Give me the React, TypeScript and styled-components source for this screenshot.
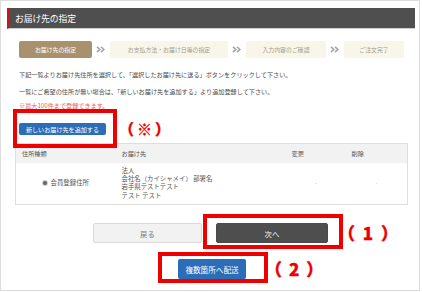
import React from "react";
import styled, { createGlobalStyle } from "styled-components";

const Global = createGlobalStyle`
  html, body { margin: 0; padding: 0; background: #fff; }
  body { font-family: "Noto Sans CJK JP", "Noto Sans", sans-serif; color: #444; }
  * { box-sizing: border-box; }
`;

const Frame = styled.div`
  width: 420px;
  height: 291px;
  border: 1px solid #dcdcdc;
  padding: 7px 4px 0 6px;
  display: flex;
  flex-direction: column;
`;

const TitleBar = styled.div`
  height: 21px;
  background: #4f4f4f;
  border-left: 2px solid #c8161d;
  border-bottom: 1px solid #cfcfcf;
  color: #fff;
  font-size: 8.8px;
  display: flex;
  align-items: center;
  padding-left: 6px;
  letter-spacing: -0.1px;
`;

const Content = styled.div`
  padding: 0 2px 0 8px;
  display: flex;
  flex-direction: column;
`;

const Steps = styled.div`
  display: flex;
  align-items: center;
  margin: 12px 0 0 4px;
  height: 17px;
`;

const Step = styled.div<{ $active?: boolean; $w: number }>`
  width: ${(p) => p.$w}px;
  height: 17px;
  border-radius: 2px;
  background: ${(p) => (p.$active ? "#a8916c" : "#f8f5e9")};
  color: ${(p) => (p.$active ? "#fff" : "#a39d92")};
  font-size: 5.9px;
  display: flex;
  align-items: center;
  justify-content: center;
  white-space: nowrap;
`;

const Arrow = styled.div`
  width: 18px;
  display: flex;
  justify-content: center;
`;

const Text = styled.p<{ $top: number; $red?: boolean }>`
  margin: ${(p) => p.$top}px 0 0 4px;
  font-size: 6.15px;
  line-height: 10px;
  color: ${(p) => (p.$red ? "#ec5b5b" : "#4a4a4a")};
  white-space: nowrap;
`;

const Marked = styled.div<{ $top: number }>`
  position: relative;
  margin-top: ${(p) => p.$top}px;
  display: flex;
`;

const RedBox = styled.div<{ $l: number; $r: number; $t: number; $b: number }>`
  position: absolute;
  left: ${(p) => p.$l}px;
  right: ${(p) => p.$r}px;
  top: ${(p) => p.$t}px;
  bottom: ${(p) => p.$b}px;
  border: 4px solid #ee0000;
  pointer-events: none;
`;

const Note = styled.span<{ $left: number; $size: number; $ls: number }>`
  position: absolute;
  left: ${(p) => p.$left}px;
  top: 50%;
  transform: translateY(-54%);
  color: #ee0000;
  font-weight: 900;
  font-size: ${(p) => p.$size}px;
  letter-spacing: ${(p) => p.$ls}px;
  white-space: nowrap;
  font-family: "Noto Sans CJK JP", sans-serif;
  -webkit-text-stroke: 0.3px #ee0000;
`;

const BlueButton = styled.button<{ $w: number; $h: number; $fs: number }>`
  width: ${(p) => p.$w}px;
  height: ${(p) => p.$h}px;
  background: #2c6db8;
  color: #fff;
  border: none;
  border-radius: 2px;
  font-family: inherit;
  font-size: ${(p) => p.$fs}px;
  padding: 0;
  display: flex;
  align-items: center;
  justify-content: center;
  white-space: nowrap;
`;

const AddWrap = styled(Marked)`
  margin-left: 4px;
  align-self: flex-start;
`;

const Table = styled.table`
  margin-top: 8px;
  width: 392px;
  border-collapse: collapse;
  border: 1px solid #dedede;
  font-size: 6.2px;
  color: #555;
  table-layout: fixed;
`;

const Th = styled.th<{ $w: number }>`
  width: ${(p) => p.$w}px;
  height: 19px;
  background: #f2f2f2;
  font-weight: 400;
  text-align: left;
  padding: 0 0 0 6px;
  color: #555;
`;

const Td = styled.td<{ $center?: boolean }>`
  height: 42px;
  padding: 0 0 0 6px;
  text-align: ${(p) => (p.$center ? "center" : "left")};
  vertical-align: middle;
  font-size: 6.4px;
  line-height: 8.3px;
  color: #555;
`;

const CenterCell = styled(Td)`
  padding: 0;
  color: #999;
  font-size: 5px;
`;

const KindLabel = styled.div`
  display: flex;
  align-items: center;
  justify-content: center;
  gap: 4px;
  padding-right: 6px;
`;

const Radio = styled.span`
  width: 4px;
  height: 4px;
  border-radius: 50%;
  background: #666;
  box-shadow: 0 0 0 1px #ccc;
`;

const ButtonRow = styled.div`
  display: flex;
  justify-content: center;
  gap: 14px;
  margin-top: 18px;
  padding-right: 1px;
`;

const GrayButton = styled.button<{ $dark?: boolean }>`
  width: ${(p) => (p.$dark ? 112 : 109)}px;
  height: 20px;
  border-radius: 2px;
  border: 1px solid ${(p) => (p.$dark ? "#4a4a4a" : "#dadada")};
  background: ${(p) => (p.$dark ? "#4e4e4e" : "#f2f2f2")};
  color: ${(p) => (p.$dark ? "#fff" : "#777")};
  font-family: inherit;
  font-size: 7.4px;
  padding: 0;
`;

const BottomRow = styled.div`
  display: flex;
  justify-content: center;
  margin-top: 16px;
  padding-left: 2px;
`;

const Chevrons = () => (
  <svg width="10" height="7" viewBox="0 0 10 7">
    <path d="M1 0.8 L3.8 3.5 L1 6.2" stroke="#a5a5a5" strokeWidth="1.6" fill="none" />
    <path d="M5 0.8 L7.8 3.5 L5 6.2" stroke="#a5a5a5" strokeWidth="1.6" fill="none" />
  </svg>
);

export default function App() {
  return (
    <>
      <Global />
      <Frame>
        <TitleBar>お届け先の指定</TitleBar>
        <Content>
          <Steps>
            <Step $active $w={73}>お届け先の指定</Step>
            <Arrow><Chevrons /></Arrow>
            <Step $w={118}>お支払方法・お届け日等の指定</Step>
            <Arrow><Chevrons /></Arrow>
            <Step $w={80}>入力内容のご確認</Step>
            <Arrow><Chevrons /></Arrow>
            <Step $w={60}>ご注文完了</Step>
          </Steps>
          <Text $top={12}>下記一覧よりお届け先住所を選択して、「選択したお届け先に送る」ボタンをクリックして下さい。</Text>
          <Text $top={7}>一覧にご希望の住所が無い場合は、「新しいお届け先を追加する」より追加登録して下さい。</Text>
          <Text $top={4} $red>※最大100件まで登録できます。</Text>
          <AddWrap $top={12}>
            <BlueButton $w={87} $h={12} $fs={6.1}>新しいお届け先を追加する</BlueButton>
            <RedBox $l={-6} $r={-11} $t={-14} $b={-13} />
            <Note $left={100} $size={15} $ls={3}>（※）</Note>
          </AddWrap>
          <Table>
            <thead>
              <tr>
                <Th $w={100}>住所種類</Th>
                <Th $w={170}>お届け先</Th>
                <Th $w={60}>変更</Th>
                <Th $w={62}>削除</Th>
              </tr>
            </thead>
            <tbody>
              <tr>
                <Td>
                  <KindLabel>
                    <Radio />
                    会員登録住所
                  </KindLabel>
                </Td>
                <Td>
                  法人
                  <br />
                  会社名（カイシャメイ） 部署名
                  <br />
                  岩手県テストテスト
                  <br />
                  テスト テスト
                </Td>
                <CenterCell $center>-</CenterCell>
                <CenterCell $center>-</CenterCell>
              </tr>
            </tbody>
          </Table>
        </Content>
        <ButtonRow>
          <GrayButton>戻る</GrayButton>
          <Marked $top={0}>
            <GrayButton $dark>次へ</GrayButton>
            <RedBox $l={-13} $r={-15} $t={-9} $b={-6} />
            <Note $left={122} $size={17} $ls={7.8}>（1）</Note>
          </Marked>
        </ButtonRow>
        <BottomRow>
          <Marked $top={0}>
            <BlueButton $w={68} $h={20} $fs={7.6}>複数箇所へ配送</BlueButton>
            <RedBox $l={-20} $r={-22} $t={-7} $b={-4} />
            <Note $left={87} $size={17} $ls={6.9}>（2）</Note>
          </Marked>
        </BottomRow>
      </Frame>
    </>
  );
}
